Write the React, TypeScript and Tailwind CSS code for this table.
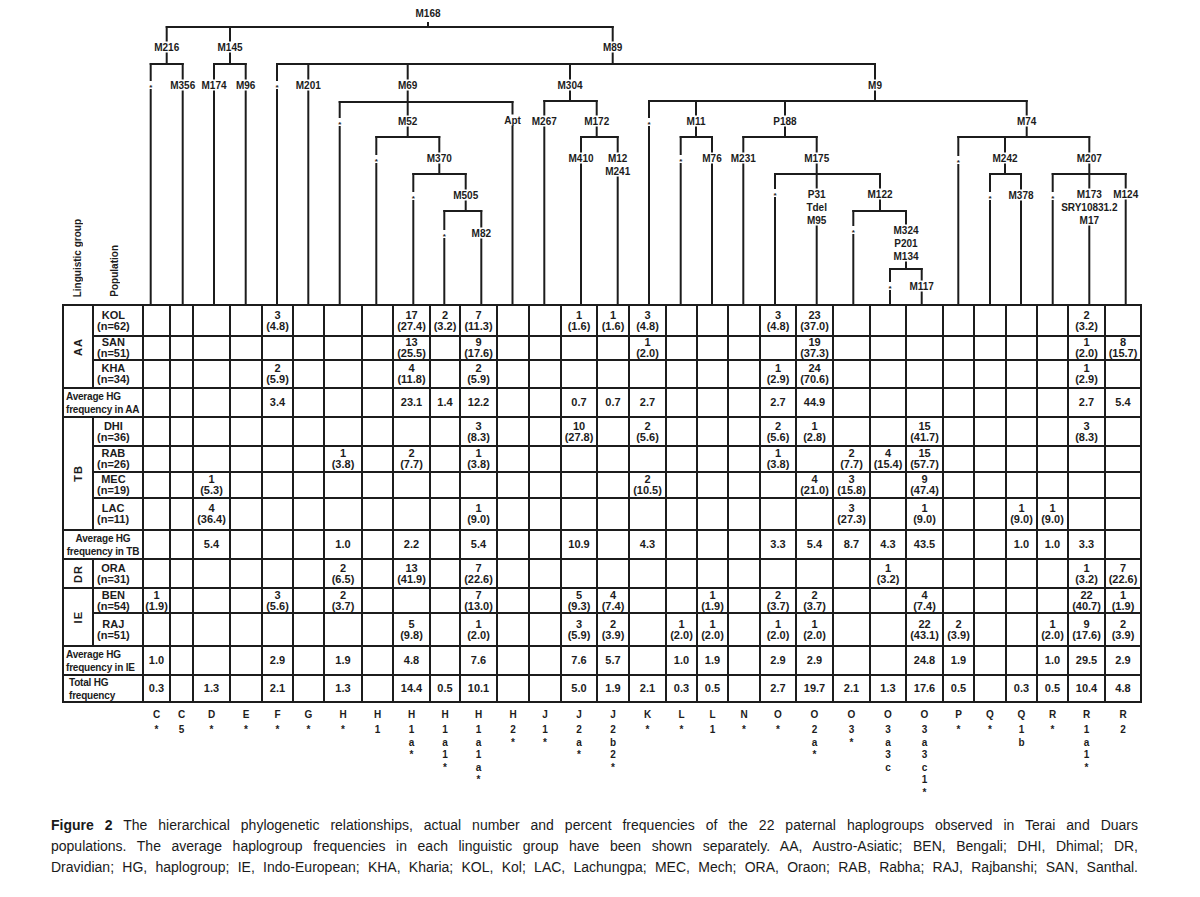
import React from 'react';

type Node = { l: string[]; x: number; y: number; by?: number; c?: Node[] };

const INK = '#1c1c1c';

// tree drawn in page coordinates (x from 142 to 1142)
const TREE: Node = {
  l: ['M168'], x: 428, y: 13, by: 27, c: [
    { l: ['M216'], x: 166.7, y: 47, by: 64, c: [
      { l: ['*'], x: 150.7, y: 85 },
      { l: ['M356'], x: 182.7, y: 85 },
    ] },
    { l: ['M145'], x: 230, y: 47, by: 64, c: [
      { l: ['M174'], x: 214, y: 85 },
      { l: ['M96'], x: 245.7, y: 85 },
    ] },
    { l: ['M89'], x: 612.7, y: 47, by: 64, c: [
      { l: ['*'], x: 277, y: 85 },
      { l: ['M201'], x: 308.3, y: 85 },
      { l: ['M69'], x: 407.7, y: 85, by: 102, c: [
        { l: ['*'], x: 339.7, y: 122 },
        { l: ['M52'], x: 407.7, y: 121, by: 137, c: [
          { l: ['*'], x: 376.3, y: 159 },
          { l: ['M370'], x: 439.3, y: 158, by: 174, c: [
            { l: ['*'], x: 413.3, y: 196 },
            { l: ['M505'], x: 465.7, y: 195, by: 211, c: [
              { l: ['*'], x: 444.3, y: 234 },
              { l: ['M82'], x: 481.3, y: 233 },
            ] },
          ] },
        ] },
        { l: ['Apt'], x: 512.5, y: 120 },
      ] },
      { l: ['M304'], x: 570, y: 85, by: 101, c: [
        { l: ['M267'], x: 544.3, y: 121 },
        { l: ['M172'], x: 596.7, y: 121, by: 137, c: [
          { l: ['M410'], x: 581, y: 158 },
          { l: ['M12', 'M241'], x: 617.7, y: 158 },
        ] },
      ] },
      { l: ['M9'], x: 875, y: 85, by: 101, c: [
        { l: ['*'], x: 649, y: 122 },
        { l: ['M11'], x: 696, y: 121, by: 137, c: [
          { l: ['*'], x: 680.7, y: 159 },
          { l: ['M76'], x: 712, y: 158 },
        ] },
        { l: ['P188'], x: 785, y: 121, by: 137, c: [
          { l: ['M231'], x: 743.3, y: 158 },
          { l: ['M175'], x: 816.7, y: 158, by: 174, c: [
            { l: ['*'], x: 775, y: 193 },
            { l: ['P31', 'Tdel', 'M95'], x: 816.7, y: 194 },
            { l: ['M122'], x: 880, y: 194, by: 211, c: [
              { l: ['*'], x: 853.3, y: 230 },
              { l: ['M324', 'P201', 'M134'], x: 906, y: 230, by: 269, c: [
                { l: ['*'], x: 890, y: 286 },
                { l: ['M117'], x: 921.7, y: 286 },
              ] },
            ] },
          ] },
        ] },
        { l: ['M74'], x: 1026.7, y: 121, by: 137, c: [
          { l: ['*'], x: 958.3, y: 160 },
          { l: ['M242'], x: 1005, y: 158, by: 174, c: [
            { l: ['*'], x: 990, y: 196 },
            { l: ['M378'], x: 1021, y: 195 },
          ] },
          { l: ['M207'], x: 1089.3, y: 158, by: 174, c: [
            { l: ['*'], x: 1052.7, y: 196 },
            { l: ['M173', 'SRY10831.2', 'M17'], x: 1089.3, y: 194 },
            { l: ['M124'], x: 1125.7, y: 194 },
          ] },
        ] },
      ] },
    ] },
  ],
};

function drawTree(n: Node, parentY: number | null, lines: React.ReactNode[], texts: React.ReactNode[], key: string) {
  const star = n.l[0] === '*';
  const top = star ? n.y - 5 : n.y - 6.5;
  const bottom = parentY === null ? 23 : star ? n.y + 5 : n.y + 13 * (n.l.length - 1) + 6.5;
  if (parentY !== null) lines.push(<line key={key + 'a'} x1={n.x} x2={n.x} y1={parentY} y2={top} />);
  n.l.forEach((t, i) =>
    texts.push(
      <text key={key + 't' + i} x={n.x} y={star ? n.y + 2 : n.y + 13 * i} fontSize={star ? 8 : 10}>
        {t}
      </text>
    )
  );
  if (n.c && n.by) {
    const xs = n.c.map((c) => c.x);
    lines.push(<line key={key + 'b'} x1={n.x} x2={n.x} y1={bottom} y2={n.by} />);
    lines.push(<line key={key + 'h'} x1={Math.min(...xs)} x2={Math.max(...xs)} y1={n.by} y2={n.by} />);
    n.c.forEach((c, i) => drawTree(c, n.by!, lines, texts, key + '-' + i));
  } else {
    lines.push(<line key={key + 'b'} x1={n.x} x2={n.x} y1={bottom} y2={305} />);
  }
}

type Row = {
  g?: string;
  span?: number;
  p?: string[];
  avg?: string[];
  center?: boolean;
  total?: boolean;
  d: Record<number, string>;
};

const ROWS: Row[] = [
  { g: 'AA', span: 3, p: ['KOL', '(n=62)'], d: { 5: '3 (4.8)', 9: '17 (27.4)', 10: '2 (3.2)', 11: '7 (11.3)', 14: '1 (1.6)', 15: '1 (1.6)', 16: '3 (4.8)', 20: '3 (4.8)', 21: '23 (37.0)', 29: '2 (3.2)' } },
  { p: ['SAN', '(n=51)'], d: { 9: '13 (25.5)', 11: '9 (17.6)', 16: '1 (2.0)', 21: '19 (37.3)', 29: '1 (2.0)', 30: '8 (15.7)' } },
  { p: ['KHA', '(n=34)'], d: { 5: '2 (5.9)', 9: '4 (11.8)', 11: '2 (5.9)', 20: '1 (2.9)', 21: '24 (70.6)', 29: '1 (2.9)' } },
  { avg: ['Average HG', 'frequency in AA'], d: { 5: '3.4', 9: '23.1', 10: '1.4', 11: '12.2', 14: '0.7', 15: '0.7', 16: '2.7', 20: '2.7', 21: '44.9', 29: '2.7', 30: '5.4' } },
  { g: 'TB', span: 4, p: ['DHI', '(n=36)'], d: { 11: '3 (8.3)', 14: '10 (27.8)', 16: '2 (5.6)', 20: '2 (5.6)', 21: '1 (2.8)', 24: '15 (41.7)', 29: '3 (8.3)' } },
  { p: ['RAB', '(n=26)'], d: { 7: '1 (3.8)', 9: '2 (7.7)', 11: '1 (3.8)', 20: '1 (3.8)', 22: '2 (7.7)', 23: '4 (15.4)', 24: '15 (57.7)' } },
  { p: ['MEC', '(n=19)'], d: { 3: '1 (5.3)', 16: '2 (10.5)', 21: '4 (21.0)', 22: '3 (15.8)', 24: '9 (47.4)' } },
  { p: ['LAC', '(n=11)'], d: { 3: '4 (36.4)', 11: '1 (9.0)', 22: '3 (27.3)', 24: '1 (9.0)', 27: '1 (9.0)', 28: '1 (9.0)' } },
  { avg: ['Average HG', 'frequency in TB'], center: true, d: { 3: '5.4', 7: '1.0', 9: '2.2', 11: '5.4', 14: '10.9', 16: '4.3', 20: '3.3', 21: '5.4', 22: '8.7', 23: '4.3', 24: '43.5', 27: '1.0', 28: '1.0', 29: '3.3' } },
  { g: 'DR', span: 1, p: ['ORA', '(n=31)'], d: { 7: '2 (6.5)', 9: '13 (41.9)', 11: '7 (22.6)', 23: '1 (3.2)', 29: '1 (3.2)', 30: '7 (22.6)' } },
  { g: 'IE', span: 2, p: ['BEN', '(n=54)'], d: { 1: '1 (1.9)', 5: '3 (5.6)', 7: '2 (3.7)', 11: '7 (13.0)', 14: '5 (9.3)', 15: '4 (7.4)', 18: '1 (1.9)', 20: '2 (3.7)', 21: '2 (3.7)', 24: '4 (7.4)', 29: '22 (40.7)', 30: '1 (1.9)' } },
  { p: ['RAJ', '(n=51)'], d: { 9: '5 (9.8)', 11: '1 (2.0)', 14: '3 (5.9)', 15: '2 (3.9)', 17: '1 (2.0)', 18: '1 (2.0)', 20: '1 (2.0)', 21: '1 (2.0)', 24: '22 (43.1)', 25: '2 (3.9)', 28: '1 (2.0)', 29: '9 (17.6)', 30: '2 (3.9)' } },
  { avg: ['Average HG', 'frequency in IE'], d: { 1: '1.0', 5: '2.9', 7: '1.9', 9: '4.8', 11: '7.6', 14: '7.6', 15: '5.7', 17: '1.0', 18: '1.9', 20: '2.9', 21: '2.9', 24: '24.8', 25: '1.9', 28: '1.0', 29: '29.5', 30: '2.9' } },
  { avg: ['Total HG', 'frequency'], total: true, d: { 1: '0.3', 3: '1.3', 5: '2.1', 7: '1.3', 9: '14.4', 10: '0.5', 11: '10.1', 14: '5.0', 15: '1.9', 16: '2.1', 17: '0.3', 18: '0.5', 20: '2.7', 21: '19.7', 22: '2.1', 23: '1.3', 24: '17.6', 25: '0.5', 27: '0.3', 28: '0.5', 29: '10.4', 30: '4.8' } },
];

const LABELS: string[] = [
  'C*', 'C5', 'D*', 'E*', 'F*', 'G*', 'H*', 'H1', 'H1a*', 'H1a1*', 'H1a1a*', 'H2*', 'J1*', 'J2a*', 'J2b2*',
  'K*', 'L*', 'L1', 'N*', 'O*', 'O2a*', 'O3*', 'O3a3c', 'O3a3c1*', 'P*', 'Q*', 'Q1b', 'R*', 'R1a1*', 'R2',
];

const SPAN: Record<number, string> = { 1: '', 2: 'row-span-2', 3: 'row-span-3', 4: 'row-span-4' };

const COLS =
  'grid-cols-[28px_48px_25px_21px_35px_30px_29px_29px_36px_29px_35px_28px_35px_30px_30px_34px_30px_35px_29px_29px_30px_34px_35px_35px_34px_35px_29px_30px_29px_29px_35px_34px]';

function DataCell({ v }: { v?: string }) {
  const parts = v ? v.split(' ') : [];
  return (
    <div className="bg-white flex flex-col items-center justify-center text-[11px] font-bold leading-[11px]">
      {parts.map((p, i) => (
        <span key={i}>{p}</span>
      ))}
    </div>
  );
}

export default function App() {
  const lines: React.ReactNode[] = [];
  const texts: React.ReactNode[] = [];
  drawTree(TREE, null, lines, texts, 'r');

  const cells: React.ReactNode[] = [];
  ROWS.forEach((r, ri) => {
    if (r.g) {
      cells.push(
        <div key={`g${ri}`} className={`bg-white flex items-center justify-center ${SPAN[r.span ?? 1]}`}>
          <span className="[writing-mode:vertical-rl] rotate-180 text-[11px] font-bold tracking-[1px]">{r.g}</span>
        </div>
      );
    }
    if (r.p) {
      cells.push(
        <div key={`p${ri}`} className="bg-white flex items-center pl-[3px]">
          <div className="flex flex-col items-center text-[11px] font-bold leading-[11px]">
            <span>{r.p[0]}</span>
            <span>{r.p[1]}</span>
          </div>
        </div>
      );
    }
    if (r.avg) {
      const align = r.center ? 'items-center' : r.total ? 'items-start pl-[5px]' : 'items-start pl-[2px]';
      cells.push(
        <div
          key={`a${ri}`}
          className={`col-span-2 bg-white flex flex-col justify-center text-[10px] font-bold leading-[13px] tracking-[-0.2px] ${align}`}
        >
          <span className="whitespace-nowrap">{r.avg[0]}</span>
          <span className="whitespace-nowrap">{r.avg[1]}</span>
        </div>
      );
    }
    for (let c = 1; c <= 30; c++) cells.push(<DataCell key={`d${ri}-${c}`} v={r.d[c]} />);
  });

  return (
    <div className="w-[1200px] h-[897px] bg-white overflow-hidden text-[#1c1c1c] [font-family:'Liberation_Sans',Arial,sans-serif]">
      <div className="ml-[62px] w-[1080px]">
        {/* tree + rotated headers */}
        <div className="flex h-[304px]">
          <div className="w-[31px] flex items-end justify-center pb-[7px]">
            <span className="[writing-mode:vertical-rl] rotate-180 text-[10px] font-bold leading-[12px]">Linguistic group</span>
          </div>
          <div className="w-[49px] flex items-end pl-[16px] pb-[7px]">
            <span className="[writing-mode:vertical-rl] rotate-180 text-[10px] font-bold leading-[12px]">Population</span>
          </div>
          <svg width={1000} height={304} viewBox="142 0 1000 304" className="block shrink-0">
            <g stroke={INK} strokeWidth={2} strokeLinecap="square">
              {lines}
            </g>
            <g fill={INK} fontWeight="bold" textAnchor="middle" dominantBaseline="central">
              {texts}
            </g>
          </svg>
        </div>

        {/* table */}
        <div
          className={`grid ${COLS} grid-rows-[29px_22px_26px_27px_27px_24px_24px_30px_27px_27px_23px_31px_27px_25px] gap-[2px] p-[2px] bg-[#1c1c1c]`}
        >
          {cells}
        </div>

        {/* haplogroup names */}
        <div className={`grid ${COLS} gap-x-[2px] px-[2px] mt-[6px] h-[100px]`}>
          <div />
          <div />
          {LABELS.map((l) => (
            <div key={l} className="flex flex-col items-center text-[10px] font-bold leading-[12.5px]">
              <span className="mb-[2.5px]">{l[0]}</span>
              {l
                .slice(1)
                .split('')
                .map((ch, i) => (
                  <span key={i}>{ch}</span>
                ))}
            </div>
          ))}
        </div>
      </div>

      {/* caption */}
      <div className="ml-[51px] w-[1087px] mt-[6px] text-[14px] leading-[21px] text-[#1a1a1a]">
        <p className="text-justify [text-align-last:justify]">
          <b>Figure 2</b> The hierarchical phylogenetic relationships, actual number and percent frequencies of the 22 paternal haplogroups observed in Terai and Duars
        </p>
        <p className="text-justify [text-align-last:justify]">
          populations. The average haplogroup frequencies in each linguistic group have been shown separately. AA, Austro-Asiatic; BEN, Bengali; DHI, Dhimal; DR,
        </p>
        <p className="text-justify [text-align-last:justify]">
          Dravidian; HG, haplogroup; IE, Indo-European; KHA, Kharia; KOL, Kol; LAC, Lachungpa; MEC, Mech; ORA, Oraon; RAB, Rabha; RAJ, Rajbanshi; SAN, Santhal.
        </p>
      </div>
    </div>
  );
}
